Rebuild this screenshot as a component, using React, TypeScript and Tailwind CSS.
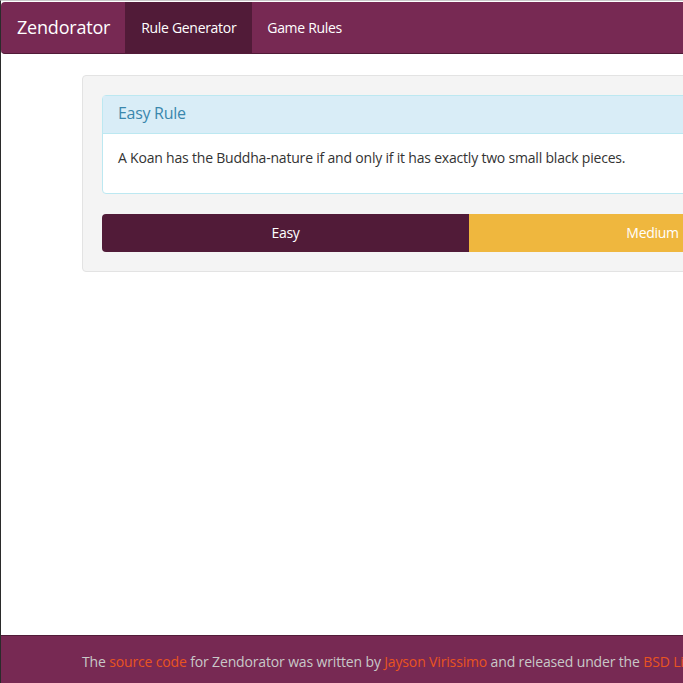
import React from "react";

export default function App() {
  return (
    <div className="w-[683px] h-[683px] overflow-hidden bg-white" style={{ fontFamily: "'Open Sans', 'Noto Sans', sans-serif" }}>
      <div className="w-[1304px] h-[683px] flex flex-col border-l border-[#2b2b2b] border-t border-t-[#c8c8c8]">
        <nav className="h-[52px] mt-[1px] bg-[#772953] border-b border-[#511b38] rounded-tl-[4px] rounded-bl-[4px] flex items-stretch text-white">
          <div className="pl-[16px] pr-[15px] flex items-center text-[18px] tracking-[-0.2px]">Zendorator</div>
          <div className="w-[127px] flex items-center justify-center text-[14px] bg-[#511b38] tracking-[-0.3px]">Rule Generator</div>
          <div className="px-[15px] flex items-center text-[14px] tracking-[-0.3px]">Game Rules</div>
        </nav>
        <div className="flex-1">
          <div className="ml-[81px] mt-[21px] w-[1141px] bg-[#f4f4f4] border border-[#e3e3e3] rounded-[4px] p-[19px]">
            <div className="border border-[#bce8f1] rounded-[4px] bg-white">
              <div className="h-[38px] pb-[4px] bg-[#d9edf7] border-b border-[#bce8f1] px-[15px] flex items-center text-[16px] text-[#3a87ad] tracking-[-0.3px]">Easy Rule</div>
              <div className="h-[59px] px-[15px] pt-[14px] text-[14px] leading-[20px] text-[#333] tracking-[-0.2px]">
                A Koan has the Buddha-nature if and only if it has exactly two small black pieces.
              </div>
            </div>
            <div className="mt-[20px] flex h-[38px] rounded-[4px] overflow-hidden text-white text-[14px] tracking-[-0.3px]">
              <div className="flex-1 bg-[#511b38] flex items-center justify-center pb-[2px]">Easy</div>
              <div className="flex-1 bg-[#efb73e] flex items-center justify-center pb-[2px]">Medium</div>
              <div className="flex-1 bg-[#dd4814] flex items-center justify-center pb-[2px]">Hard</div>
            </div>
          </div>
        </div>
        <footer className="h-[48px] pt-[4px] bg-[#772953] border-t border-[#511b38] flex items-center pl-[81px] text-[14px] text-[#c8c8c8] tracking-[-0.15px] whitespace-nowrap">
          <span>
            The <span className="text-[#e95420]">source code</span> for Zendorator was written by{" "}
            <span className="text-[#e95420]">Jayson Virissimo</span> and released under the{" "}
            <span className="text-[#e95420]">BSD License</span>.
          </span>
        </footer>
      </div>
    </div>
  );
}
